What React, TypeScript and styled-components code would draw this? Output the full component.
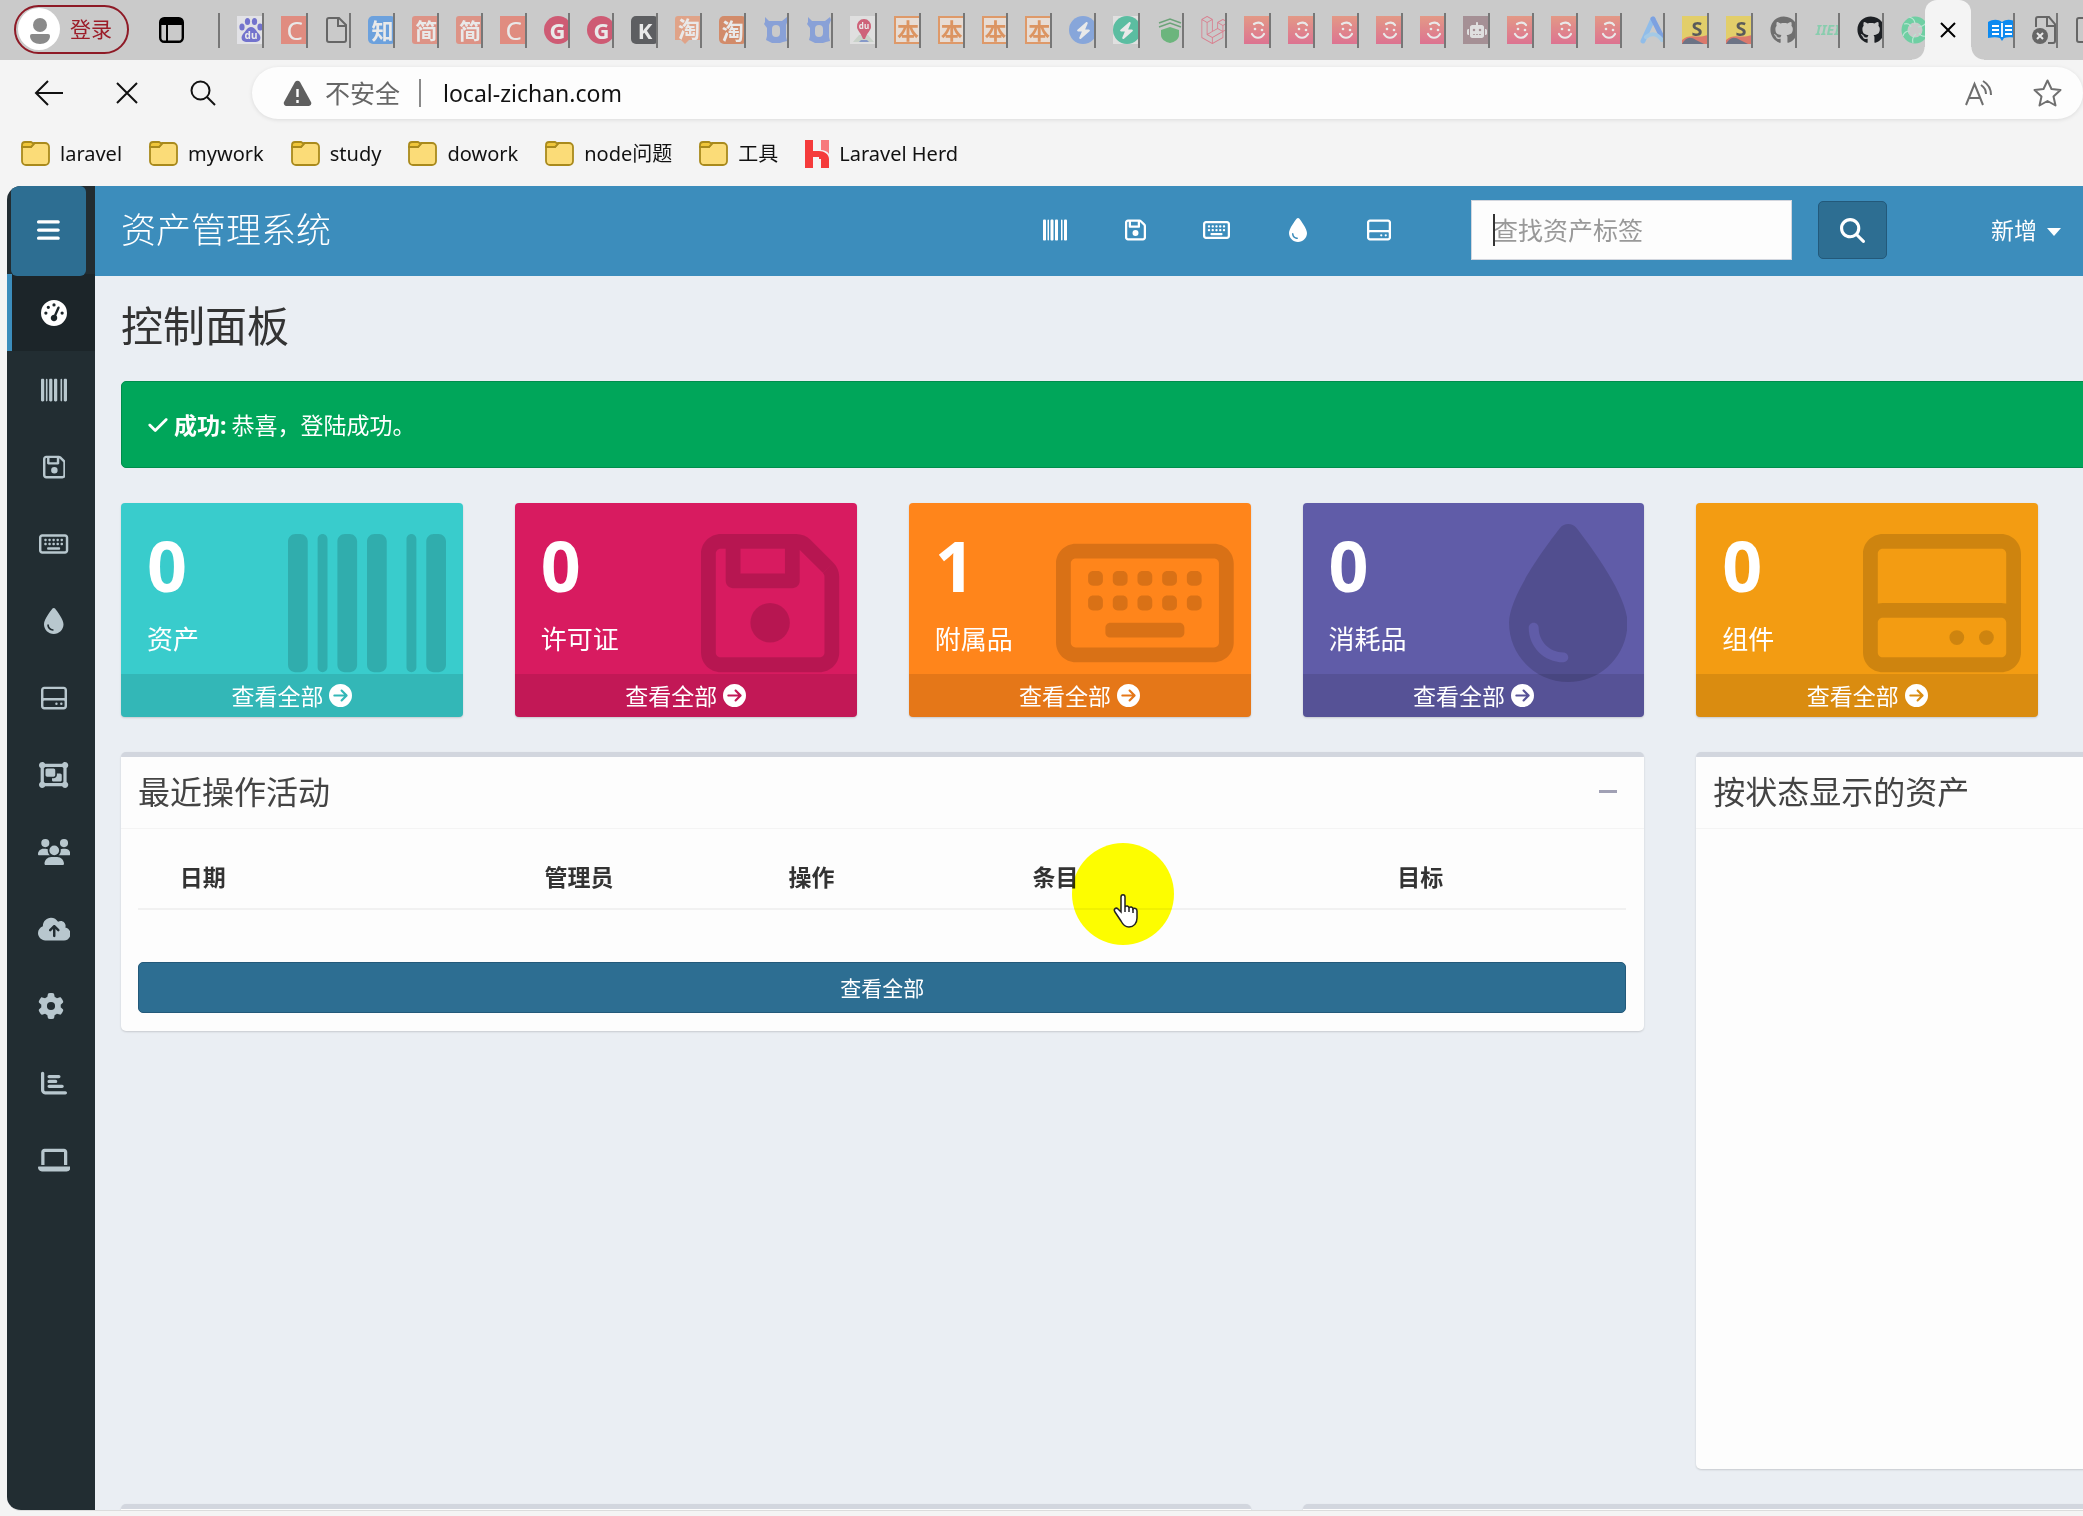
import React from "react";
import styled, { createGlobalStyle, css } from "styled-components";
import {
  FaBarcode,
  FaRegFloppyDisk,
  FaRegKeyboard,
  FaDroplet,
  FaRegHardDrive,
  FaObjectGroup,
  FaUsers,
  FaCloudArrowUp,
  FaGear,
  FaChartBar,
  FaLaptop,
  FaGaugeHigh,
  FaBars,
  FaCheck,
  FaMagnifyingGlass,
  FaCircleArrowRight,
  FaGithub,
  FaLaravel,
  FaBolt,
  FaRobot,
} from "react-icons/fa6";

/* Icon glyphs differ in width; the ratio follows each one's view box. */
const GlobalStyle = createGlobalStyle`
  *, *::before, *::after { box-sizing: border-box; }
  html, body { margin: 0; height: 100%; overflow: hidden; }
  body {
    font-family: "Noto Sans", "Noto Sans CJK SC", sans-serif;
    color: #333;
    background: #f4f4f4;
  }
  a { color: inherit; text-decoration: none; }
  button { font: inherit; margin: 0; padding: 0; border: 0; background: none; color: inherit; }
  svg { display: block; flex: none; }
  svg[viewBox="0 0 384 512"] { aspect-ratio: 384 / 512; }
  svg[viewBox="0 0 448 512"] { aspect-ratio: 448 / 512; }
  svg[viewBox="0 0 576 512"] { aspect-ratio: 576 / 512; }
  svg[viewBox="0 0 640 512"] { aspect-ratio: 640 / 512; }
`;

const Browser = styled.div`
  display: flex;
  flex-direction: column;
  height: 100vh;
  background: #f4f4f4;
`;

/* ---------- tab strip ---------- */

const TabBar = styled.div`
  display: flex;
  align-items: center;
  height: 60px;
  flex: none;
  padding-left: 14px;
  background: #cacaca;
  overflow: hidden;
`;

const Login = styled.button`
  display: flex;
  align-items: center;
  gap: 9px;
  width: 115px;
  height: 49px;
  margin-bottom: 2px;
  padding-left: 2px;
  border: 2px solid #8e1a26;
  border-radius: 25px;
  color: #9c1c28;
  font-size: 21px;
  line-height: 28px;
  white-space: nowrap;
`;

const WindowButton = styled.button`
  margin: 0 34px 0 30px;
`;

const Divider = styled.span<{ $h: number; $color: string }>`
  width: 2px;
  height: ${(p) => p.$h}px;
  background: ${(p) => p.$color};
  flex: none;
`;

const TabList = styled.div`
  display: flex;
  flex: 1;
  min-width: 0;
`;

const Tab = styled.button<{ $w?: number; $last?: boolean; $dim?: boolean }>`
  display: flex;
  align-items: center;
  height: 35px;
  padding-left: 17px;
  overflow: hidden;
  ${(p) =>
    p.$w
      ? css`
          flex: none;
          width: ${p.$w}px;
        `
      : css`
          flex: 1 1 0;
          min-width: 0;
        `}
  border-right: ${(p) => (p.$last ? "0" : "2px solid #777")};
  & > * {
    opacity: ${(p) => (p.$dim ? 0.6 : 1)};
  }
`;

const ActiveTab = styled.div`
  position: relative;
  display: flex;
  align-items: center;
  justify-content: center;
  flex: none;
  width: 46px;
  height: 60px;
  border-radius: 12px 12px 0 0;
  background: #f4f4f4;
  &::before,
  &::after {
    content: "";
    position: absolute;
    bottom: 0;
    width: 13px;
    height: 13px;
  }
  &::before {
    right: 100%;
    background: radial-gradient(circle at 0 0, transparent 12px, #f4f4f4 13px);
  }
  &::after {
    left: 100%;
    background: radial-gradient(circle at 100% 0, transparent 12px, #f4f4f4 13px);
  }
`;

const Tile = styled.span<{ $bg: string; $fg: string; $border?: string; $r?: number; $bold?: boolean; $size?: number }>`
  display: flex;
  align-items: center;
  justify-content: center;
  flex: none;
  width: 28px;
  height: 28px;
  background: ${(p) => p.$bg};
  color: ${(p) => p.$fg};
  border: ${(p) => (p.$border ? `2px solid ${p.$border}` : "0")};
  border-radius: ${(p) => p.$r ?? 0}px;
  font-size: ${(p) => p.$size ?? 22}px;
  font-weight: ${(p) => (p.$bold ? 700 : 400)};
  line-height: 28px;
`;

const BaiduIcon = () => (
  <svg width="28" height="28" viewBox="0 0 28 28">
    <rect width="28" height="28" fill="#f2f2fa" />
    <g fill="#3a3ad0">
      <ellipse cx="5" cy="11" rx="2.6" ry="3.6" />
      <ellipse cx="10.500" cy="5.500" rx="2.600" ry="3.600" />
      <ellipse cx="17.500" cy="5.500" rx="2.600" ry="3.600" />
      <ellipse cx="23" cy="11" rx="2.600" ry="3.600" />
      <path d="M14 11c4 0 5 4 8 7 3 4 1 8-3 8H9c-4 0-6-4-3-8 3-3 4-7 8-7z" />
    </g>
    <text x="14" y="23" fontSize="10" fontWeight="700" textAnchor="middle" fill="#fff">du</text>
  </svg>
);

const FileIcon = () => (
  <svg width="24" height="28" viewBox="0 0 24 28" fill="none" stroke="#666" strokeWidth="2">
    <path d="M4 2h10l7 7v15a2 2 0 0 1-2 2H4a2 2 0 0 1-2-2V4a2 2 0 0 1 2-2zM13 2v8h8" />
  </svg>
);

const OxIcon = () => (
  <svg width="26" height="28" viewBox="0 0 26 28">
    <path
      d="M2 1l4 4h13l5-4 1 3-2 5v12l1 4-4 1-3 1H9l-4-2-2-1 1-4v-8L1 8l1-2z"
      fill="#5f86e0"
    />
    <rect x="9" y="9" width="8" height="12" rx="4" fill="#cacaca" />
  </svg>
);

const TaobaoBubble = styled.span`
  position: relative;
  display: flex;
  align-items: center;
  justify-content: center;
  flex: none;
  width: 28px;
  height: 28px;
  padding-bottom: 4px;
  background: linear-gradient(#f08a5d, #f08a5d) 0 0 / 100% 24px no-repeat;
  border-radius: 3px;
  color: #fff;
  font-size: 22px;
  font-weight: 700;
  line-height: 24px;
  &::after {
    content: "";
    position: absolute;
    bottom: 0;
    left: 6px;
    border: 4px solid transparent;
    border-top-color: #f08a5d;
    border-bottom: 0;
  }
`;

const PinIcon = () => (
  <svg width="26" height="28" viewBox="0 0 26 28">
    <rect width="26" height="28" fill="#ededed" />
    <path d="M3 26l6-7h9l6 7z" fill="#c9d8c9" />
    <path d="M14 3a7 7 0 0 1 7 8c0 3-4 6-6 12h-2C11 17 7 14 7 11a7 7 0 0 1 7-8z" fill="#d21f45" />
    <path d="M9 26h10l-2-2h-6z" fill="#5a79c8" />
    <text x="14" y="13" fontSize="8" fontWeight="700" textAnchor="middle" fill="#fff">du</text>
  </svg>
);

const BoltWrap = styled.span<{ $bg: string; $tile?: string; $shape: string }>`
  display: flex;
  flex: none;
  width: 28px;
  height: 28px;
  background: ${(p) => p.$tile ?? "transparent"};
  & > span {
    display: flex;
    align-items: center;
    justify-content: center;
    width: 28px;
    height: 28px;
    border-radius: ${(p) => p.$shape};
    background: ${(p) => p.$bg};
    color: #fff;
    font-size: 17px;
  }
`;

const ShieldIcon = () => (
  <svg width="26" height="28" viewBox="0 0 26 28">
    <path d="M4 14l9-3 9 3v5c0 4-4 7-9 8-5-1-9-4-9-8z" fill="#2fa84a" />
    <path d="M2 11l11-4 11 4M2 7l11-4 11 4" stroke="#2f8a45" strokeWidth="1.600" fill="none" />
  </svg>
);

const SmileIcon = ({ id }: { id: string }) => (
  <svg width="28" height="28" viewBox="0 0 28 28">
    <defs>
      <linearGradient id={id} x1="0" y1="0" x2="0" y2="1">
        <stop offset="0" stopColor="#f4795a" />
        <stop offset="1" stopColor="#ea3a6c" />
      </linearGradient>
    </defs>
    <rect width="28" height="28" fill={`url(#${id})`} />
    <g fill="none" stroke="#fff" strokeWidth="2.200" strokeLinecap="round">
      <path d="M10 8c3-2 7-2 9 1M8 18c3 5 9 5 12 0" />
    </g>
    <circle cx="11" cy="13" r="1.300" fill="#fff" />
    <circle cx="18" cy="14" r="1.300" fill="#fff" />
  </svg>
);

const LetterAIcon = () => (
  <svg width="28" height="28" viewBox="0 0 28 28" fill="none" strokeLinecap="round" strokeWidth="5">
    <path d="M4 25L14 3" stroke="#6cb6ff" />
    <path d="M14 3l10 20" stroke="#4a86f0" />
    <path d="M7 21c5-4 11-4 16 3" stroke="#8cc9f8" strokeWidth="4" />
  </svg>
);

const StripeIcon = () => (
  <svg width="28" height="28" viewBox="0 0 28 28">
    <rect width="28" height="28" fill="#f3d22b" />
    <path d="M0 24c8-8 16 0 28-6v10H0z" fill="#e8442e" />
    <path d="M0 28c4-7 8-8 14-4l8 4z" fill="#2f3a58" />
    <text x="15" y="20" fontSize="20" fontWeight="700" textAnchor="middle" fill="#111">S</text>
  </svg>
);

const SwirlIcon = () => (
  <svg width="28" height="28" viewBox="0 0 28 28" fill="none">
    <circle cx="14" cy="14" r="10.500" stroke="#6fcfa3" strokeWidth="6" />
    <path d="M8 1c4 1 6 4 6 7M25 7c-2 3-5 4-8 4M26 20c-4 1-7-1-8-3M12 27c-1-3 0-7 3-9M2 20c1-4 4-5 7-5M3 8c3-1 6 0 7 3" stroke="#b9e6d2" strokeWidth="1.200" />
  </svg>
);

const BookIcon = () => (
  <svg width="30" height="28" viewBox="0 0 30 28">
    <path d="M0 6c5-3 10-3 14 0 4-3 9-3 14 0v16c-5-1-9-1-12 0l-2 3-2-3c-3-1-7-1-12 0z" fill="#0d8af0" />
    <path d="M14 7v14M4 10h7M4 14h7M4 18h7M17 10h7M17 14h7M17 18h7" stroke="#fff" strokeWidth="1.800" />
  </svg>
);

const BrokenFileIcon = () => (
  <svg width="26" height="28" viewBox="0 0 26 28" fill="none" stroke="#666" strokeWidth="2">
    <path d="M4 11V3a2 2 0 0 1 2-2h11l6 7v17a2 2 0 0 1-2 2h-5M15 1v9h9" />
    <circle cx="8" cy="20" r="8" fill="#666" stroke="none" />
    <path d="M5 17l6 6M11 17l-6 6" stroke="#e8e8e8" />
  </svg>
);

const Cjk = ({ ch, bg, r = 3 }: { ch: string; bg: string; r?: number }) => (
  <Tile $bg={bg} $fg="#fff" $r={r} $bold>
    {ch}
  </Tile>
);

const tabs: { name: string; icon: React.ReactNode; solid?: boolean }[] = [
  { name: "baidu", icon: <BaiduIcon /> },
  { name: "csdn", icon: <Tile $bg="#ef6450" $fg="#fff" $size={26}>C</Tile> },
  { name: "file", icon: <FileIcon />, solid: true },
  { name: "zhihu", icon: <Cjk ch="知" bg="#2f86ea" r={5} /> },
  { name: "jianshu", icon: <Cjk ch="简" bg="#ea6f5a" /> },
  { name: "jianshu", icon: <Cjk ch="简" bg="#ea6f5a" /> },
  { name: "csdn", icon: <Tile $bg="#ef6450" $fg="#fff" $size={26}>C</Tile> },
  { name: "gitee", icon: <Tile $bg="#d2123c" $fg="#fff" $r={14} $bold>G</Tile> },
  { name: "gitee", icon: <Tile $bg="#d2123c" $fg="#fff" $r={14} $bold>G</Tile> },
  { name: "kimi", icon: <Tile $bg="#16181c" $fg="#fff" $r={5} $bold>K</Tile> },
  { name: "taobao", icon: <TaobaoBubble>淘</TaobaoBubble> },
  { name: "taobao", icon: <Cjk ch="淘" bg="#d8622c" r={5} /> },
  { name: "ox", icon: <OxIcon /> },
  { name: "ox", icon: <OxIcon /> },
  { name: "map", icon: <PinIcon /> },
  ...[1, 2, 3, 4].map(() => ({
    name: "book",
    icon: <Tile $bg="#fbe9dc" $fg="#e8711c" $border="#ec7a2a" $bold>本</Tile>,
  })),
  { name: "bolt", icon: <BoltWrap $bg="#5b8fe6" $shape="14px"><span><FaBolt /></span></BoltWrap> },
  { name: "bolt", icon: <BoltWrap $bg="#12b586" $tile="#f0f0f0" $shape="14px"><span><FaBolt /></span></BoltWrap> },
  { name: "shield", icon: <ShieldIcon /> },
  { name: "laravel", icon: <FaLaravel size={28} color="#e2506a" /> },
  ...[1, 2, 3, 4, 5].map((n) => ({ name: "smile", icon: <SmileIcon id={`sm${n}`} /> })),
  { name: "robot", icon: <Tile $bg="#8d6a72" $fg="#eee" $size={20}><FaRobot /></Tile> },
  ...[6, 7, 8].map((n) => ({ name: "smile", icon: <SmileIcon id={`sm${n}`} /> })),
  { name: "letter a", icon: <LetterAIcon /> },
  { name: "stripe", icon: <StripeIcon /> },
  { name: "stripe", icon: <StripeIcon /> },
  { name: "github", icon: <FaGithub size={28} color="#333" /> },
  { name: "iiei", icon: <Tile $bg="transparent" $fg="#5fcf9d" $bold $size={14}><i>IIEI</i></Tile> },
  { name: "github", icon: <FaGithub size={28} color="#1d2024" />, solid: true },
];

/* ---------- toolbar and bookmarks ---------- */

const Toolbar = styled.div`
  display: flex;
  align-items: center;
  flex: none;
  height: 66px;
  background: #f4f4f4;
`;

const NavButtons = styled.div`
  display: flex;
  justify-content: space-between;
  flex: none;
  width: 252px;
  padding: 0 36px 0 34px;
`;

const Address = styled.form`
  display: flex;
  align-items: center;
  flex: 1;
  height: 52px;
  padding: 0 21px 0 31px;
  border-radius: 26px;
  background: #fdfdfd;
  box-shadow: 0 1px 4px rgba(0, 0, 0, 0.1);
`;

const Insecure = styled.span`
  margin: 0 19px 0 13px;
  color: #666;
  font-size: 25px;
  line-height: 34px;
`;

const UrlInput = styled.input`
  flex: 1;
  min-width: 0;
  margin-left: 22px;
  padding: 0;
  border: 0;
  outline: 0;
  background: none;
  color: #111;
  font: 23px/34px "Noto Sans", "Noto Sans CJK SC", sans-serif;
`;

const AddressActions = styled.div`
  display: flex;
  gap: 40px;
`;

const Bookmarks = styled.nav`
  display: flex;
  align-items: center;
  gap: 27px;
  flex: none;
  height: 55px;
  padding-left: 21px;
  color: #111;
  font-size: 20px;
  line-height: 28px;
  white-space: nowrap;
`;

const Bookmark = styled.a`
  display: flex;
  align-items: center;
  gap: 10px;
`;

const FolderIcon = () => (
  <svg width="29" height="25" viewBox="0 0 29 25" stroke="#a98a1c" strokeWidth="1.800">
    <path d="M1 6v14a4 4 0 0 0 4 4h19a4 4 0 0 0 4-4V6a4 4 0 0 0-4-4H13L10 6z" fill="#fbdc78" />
    <path d="M1 6V4a3 3 0 0 1 3-3h6l3 2-3 3z" fill="#f0c63a" />
  </svg>
);

const HerdIcon = () => (
  <svg width="24" height="28" viewBox="0 0 24 28">
    <path d="M0 0h8v11h6c5 0 10 3 10 8v9h-8v-9h-2v-2H8v11H0z" fill="#f53b3b" />
    <path d="M16 0h8v14c-2-3-5-4-8-4z" fill="#f7797c" />
  </svg>
);

const folders = ["laravel", "mywork", "study", "dowork", "node问题", "工具"];

/* ---------- page ---------- */

const Viewport = styled.div`
  display: flex;
  flex: 1;
  min-height: 0;
  margin: 5px 0 5px 7px;
  border-bottom: 1px solid #dcdcdc;
  border-radius: 14px 0 0 14px;
  overflow: hidden;
  background: #eaeef3;
`;

const Sidebar = styled.nav`
  display: flex;
  flex-direction: column;
  flex: none;
  width: 88px;
  background: #222d32;
`;

const Toggle = styled.button`
  display: flex;
  align-items: center;
  justify-content: center;
  z-index: 1;
  flex: none;
  width: 75px;
  height: 90px;
  margin: 0 0 -2px 4px;
  padding-bottom: 2px;
  border-radius: 6px;
  background: #2d6e92;
  color: #fff;
  svg {
    width: auto;
    height: 26px;
  }
`;

const SideLink = styled.a<{ $active?: boolean; $start?: boolean }>`
  display: flex;
  align-items: center;
  justify-content: ${(p) => (p.$start ? "flex-start" : "center")};
  height: 77px;
  padding: 0 ${(p) => (p.$start ? 0 : 25)}px 0 26px;
  border-left: 5px solid ${(p) => (p.$active ? "#3c8dbc" : "transparent")};
  background: ${(p) => (p.$active ? "#1c2529" : "none")};
  color: ${(p) => (p.$active ? "#fff" : "#b8c7ce")};
  svg {
    width: auto;
    height: 26px;
  }
`;

const sideItems = [
  { name: "控制面板", Icon: FaGaugeHigh, active: true },
  { name: "资产", Icon: FaBarcode },
  { name: "许可证", Icon: FaRegFloppyDisk },
  { name: "附属品", Icon: FaRegKeyboard },
  { name: "消耗品", Icon: FaDroplet },
  { name: "组件", Icon: FaRegHardDrive },
  { name: "预定义套件", Icon: FaObjectGroup },
  { name: "人员", Icon: FaUsers },
  { name: "导入", Icon: FaCloudArrowUp },
  { name: "设置", Icon: FaGear, start: true },
  { name: "报告", Icon: FaChartBar },
  { name: "可申领", Icon: FaLaptop },
];

const Main = styled.div`
  flex: 1;
  min-width: 0;
`;

const Header = styled.header`
  display: flex;
  align-items: center;
  height: 90px;
  padding: 0 22px 2px 26px;
  background: #3c8dbc;
  color: #fff;
`;

const Brand = styled.a`
  flex: 1;
  font-size: 35px;
  font-weight: 300;
  line-height: 48px;
  white-space: nowrap;
`;

const HeaderLinks = styled.div`
  display: flex;
  margin-right: 52px;
`;

const HeaderLink = styled.a`
  display: flex;
  justify-content: center;
  width: 81px;
  svg {
    width: auto;
    height: 24px;
  }
`;

const SearchForm = styled.form`
  display: flex;
  align-items: center;
  gap: 26px;
  margin-right: 104px;
`;

const SearchField = styled.label`
  position: relative;
  &::after {
    content: "";
    position: absolute;
    top: 14px;
    left: 22px;
    width: 2px;
    height: 32px;
    background: #333;
  }
`;

const SearchInput = styled.input`
  display: block;
  width: 321px;
  height: 60px;
  padding: 0 21px;
  border: 1px solid #d2d6de;
  border-radius: 0;
  outline: 0;
  background: #fdfdfd;
  font: 25px/34px "Noto Sans", "Noto Sans CJK SC", sans-serif;
  &::placeholder {
    color: #999;
    opacity: 1;
  }
`;

const SearchButton = styled.button`
  display: flex;
  align-items: center;
  justify-content: center;
  width: 69px;
  height: 58px;
  border: 1px solid #23597a;
  border-radius: 5px;
  background: #2d6e92;
  color: #fff;
`;

const CreateMenu = styled.button`
  display: flex;
  align-items: center;
  gap: 10px;
  font-size: 23px;
  line-height: 32px;
  white-space: nowrap;
  &::after {
    content: "";
    margin-top: 4px;
    border: 7px solid transparent;
    border-top: 8px solid #fff;
    border-bottom: 0;
  }
`;

const Content = styled.main`
  display: grid;
  grid-template-columns: repeat(6, minmax(0, 1fr));
  column-gap: 52px;
  row-gap: 35px;
  width: calc(100% + 375px);
  padding: 22px 26px 0;
`;

const PageTitle = styled.h1`
  grid-column: 1 / -1;
  margin: 0 0 -7px;
  font-size: 42px;
  font-weight: 400;
  line-height: 55px;
`;

const Alert = styled.div`
  display: flex;
  align-items: center;
  gap: 5px;
  grid-column: 1 / -1;
  height: 87px;
  padding: 0 25px;
  border: 1px solid #008d4c;
  border-radius: 5px;
  background: #00a65a;
  color: #fff;
  font-size: 23px;
  line-height: 32px;
`;

const Card = styled.section<{ $bg: string }>`
  position: relative;
  display: flex;
  flex-direction: column;
  border-radius: 4px;
  background: ${(p) => p.$bg};
  color: #fff;
  box-shadow: 0 1px 2px rgba(0, 0, 0, 0.15);
`;

const CardBody = styled.div`
  padding: 20px 26px 17px;
`;

const CardNumber = styled.strong`
  display: block;
  margin-bottom: 15px;
  font-size: 70px;
  line-height: 84px;
`;

const CardLabel = styled.span`
  display: block;
  font-size: 26px;
  line-height: 35px;
`;

const CardArt = styled.span`
  position: absolute;
  top: 21px;
  right: 17px;
  color: rgba(0, 0, 0, 0.15);
  svg {
    width: auto;
    height: 158px;
  }
`;

const CardFooter = styled.a`
  position: relative;
  display: flex;
  align-items: center;
  justify-content: center;
  gap: 6px;
  height: 43px;
  border-radius: 0 0 4px 4px;
  background: rgba(0, 0, 0, 0.1);
  font-size: 23px;
  line-height: 32px;
`;

const Box = styled.section<{ $span: number; $h?: number }>`
  grid-column: span ${(p) => p.$span};
  align-self: start;
  min-height: ${(p) => p.$h ?? 0}px;
  border-top: 5px solid #d2d6de;
  border-radius: 5px;
  background: #fdfdfd;
  box-shadow: 0 1px 2px rgba(0, 0, 0, 0.15);
`;

const BoxHeader = styled.div`
  display: flex;
  align-items: center;
  justify-content: space-between;
  height: 72px;
  padding: 0 27px 2px 17px;
  border-bottom: 1px solid #f4f4f4;
  color: #444;
`;

const BoxTitle = styled.h2`
  margin: 0;
  font-size: 32px;
  font-weight: 400;
  line-height: 42px;
`;

const Collapse = styled.button`
  display: flex;
  align-items: center;
  width: 18px;
  height: 26px;
  &::before {
    content: "";
    flex: 1;
    height: 3px;
    background: #a0a0b4;
  }
`;

const BoxBody = styled.div`
  padding: 17px 18px 18px 17px;
`;

const Table = styled.table`
  width: 100%;
  margin-bottom: 52px;
  table-layout: fixed;
  border-collapse: collapse;
`;

const Th = styled.th<{ $w: string }>`
  width: ${(p) => p.$w};
  height: 63px;
  padding: 0 12px 1px;
  border-bottom: 2px solid #f1f1f1;
  font-size: 23px;
  line-height: 32px;
  text-align: left;
`;

const ViewAll = styled.a`
  display: flex;
  align-items: center;
  justify-content: center;
  height: 51px;
  border: 1px solid #23597a;
  border-radius: 5px;
  background: #2d6e92;
  color: #fff;
  font-size: 21px;
  line-height: 30px;
`;

const Pointer = styled.div`
  position: absolute;
  top: 843px;
  left: 1072px;
  width: 102px;
  height: 102px;
  border-radius: 50%;
  background: #ffff00;
  mix-blend-mode: multiply;
  pointer-events: none;
`;

const Hand = styled.svg`
  position: absolute;
  top: 894px;
  left: 1112px;
  pointer-events: none;
`;

const cards = [
  { n: 0, label: "资产", bg: "#39cccc", Icon: FaBarcode },
  { n: 0, label: "许可证", bg: "#d81b60", Icon: FaRegFloppyDisk },
  { n: 1, label: "附属品", bg: "#ff851b", Icon: FaRegKeyboard },
  { n: 0, label: "消耗品", bg: "#605ca8", Icon: FaDroplet },
  { n: 0, label: "组件", bg: "#f39c12", Icon: FaRegHardDrive },
];

const columns = [
  { title: "", w: "2%" },
  { title: "日期", w: "24.5%" },
  { title: "管理员", w: "16.4%" },
  { title: "操作", w: "16.4%" },
  { title: "条目", w: "24.5%" },
  { title: "目标", w: "auto" },
];

export default function App() {
  return (
    <Browser>
      <GlobalStyle />
      <TabBar>
        <Login>
          <svg width="43" height="43" viewBox="0 0 43 43">
            <circle cx="21" cy="21" r="21" fill="#fff" />
            <circle cx="22" cy="17" r="7" fill="#8a8a8a" />
            <path d="M12 28a2 2 0 0 1 2-2h16a2 2 0 0 1 2 2c0 5-5 8-10 8s-10-3-10-8z" fill="#8a8a8a" />
          </svg>
          登录
        </Login>
        <WindowButton aria-label="window">
          <svg width="25" height="26" viewBox="0 0 25 26">
            <rect x="1.200" y="1.200" width="22.600" height="23.600" rx="4" fill="none" stroke="#000" strokeWidth="2.400" />
            <path d="M1 8V5a4 4 0 0 1 4-4h15a4 4 0 0 1 4 4v3z" />
            <path d="M8 8v17" stroke="#000" strokeWidth="2" />
          </svg>
        </WindowButton>
        <Divider $h={35} $color="#777" />
        <TabList>
          {tabs.map((t, i) => (
            <Tab key={i} aria-label={t.name} $dim={!t.solid}>
              {t.icon}
            </Tab>
          ))}
        </TabList>
        <Tab $w={41} $last aria-label="swirl">
          <SwirlIcon />
        </Tab>
        <ActiveTab>
          <button aria-label="close">
            <svg width="16" height="16" viewBox="0 0 16 16" stroke="#000" strokeWidth="2">
              <path d="M1 1l14 14M15 1L1 15" />
            </svg>
          </button>
        </ActiveTab>
        <Tab $w={44} aria-label="book">
          <BookIcon />
        </Tab>
        <Tab $w={43} aria-label="error page">
          <BrokenFileIcon />
        </Tab>
        <Tab $w={25} $last aria-label="file">
          <FileIcon />
        </Tab>
      </TabBar>

      <Toolbar>
        <NavButtons>
          <button aria-label="back">
            <svg width="29" height="26" viewBox="0 0 29 26" fill="none" stroke="#111" strokeWidth="2">
              <path d="M14 1L2 13l12 12M2 13h27" />
            </svg>
          </button>
          <button aria-label="stop">
            <svg width="22" height="22" viewBox="0 0 22 22" stroke="#111" strokeWidth="2">
              <path d="M1 1l20 20M21 1L1 21" />
            </svg>
          </button>
          <button aria-label="search">
            <svg width="26" height="26" viewBox="0 0 26 26" fill="none" stroke="#111" strokeWidth="2">
              <circle cx="10.500" cy="10.500" r="9" />
              <path d="M17 17l8 8" />
            </svg>
          </button>
        </NavButtons>
        <Address>
          <svg width="29" height="27" viewBox="0 0 29 27">
            <path d="M12 2a3 3 0 0 1 5 0l11 20a3 3 0 0 1-2 4H3a3 3 0 0 1-2-4z" fill="#5f5f5f" />
            <path d="M14.500 9v8M14.500 20v3" stroke="#fff" strokeWidth="2.400" />
          </svg>
          <Insecure>不安全</Insecure>
          <Divider $h={28} $color="#8a8a8a" />
          <UrlInput aria-label="address" defaultValue="local-zichan.com" />
          <AddressActions>
            <button type="button" aria-label="read aloud">
              <svg width="28" height="27" viewBox="0 0 28 27" fill="none" stroke="#6f6f6f" strokeWidth="2">
                <path d="M1 25L9.500 4 18 25M4 18h11" />
                <path d="M16 5c3 2 5 5 5 9M18 1c5 3 8 8 8 14" />
              </svg>
            </button>
            <button type="button" aria-label="favorite">
              <svg width="29" height="28" viewBox="0 0 29 28" fill="none" stroke="#6f6f6f" strokeWidth="2" strokeLinejoin="round">
                <path d="M14.500 1.500l4 8.500 9 1-7 6.500 2 9-8-4.500-8 4.500 2-9-7-6.500 9-1z" />
              </svg>
            </button>
          </AddressActions>
        </Address>
      </Toolbar>

      <Bookmarks>
        {folders.map((f) => (
          <Bookmark key={f} href="#">
            <FolderIcon />
            {f}
          </Bookmark>
        ))}
        <Bookmark href="#">
          <HerdIcon />
          Laravel Herd
        </Bookmark>
      </Bookmarks>

      <Viewport>
        <Sidebar>
          <Toggle aria-label="menu">
            <FaBars />
          </Toggle>
          {sideItems.map(({ name, Icon, active, start }) => (
            <SideLink key={name} href="#" aria-label={name} $active={active} $start={start}>
              <Icon />
            </SideLink>
          ))}
        </Sidebar>
        <Main>
          <Header>
            <Brand href="#">资产管理系统</Brand>
            <HeaderLinks>
              {cards.map(({ label, Icon }) => (
                <HeaderLink key={label} href="#" aria-label={label}>
                  <Icon />
                </HeaderLink>
              ))}
            </HeaderLinks>
            <SearchForm>
              <SearchField>
                <SearchInput aria-label="查找资产标签" placeholder="查找资产标签" />
              </SearchField>
              <SearchButton type="button" aria-label="search">
                <FaMagnifyingGlass size={25} />
              </SearchButton>
            </SearchForm>
            <CreateMenu>新增</CreateMenu>
          </Header>
          <Content>
            <PageTitle>控制面板</PageTitle>
            <Alert>
              <FaCheck size={22} />
              <strong>成功:</strong>
              <span>恭喜，登陆成功。</span>
            </Alert>
            {cards.map(({ n, label, bg, Icon }) => (
              <Card key={label} $bg={bg}>
                <CardArt>
                  <Icon />
                </CardArt>
                <CardBody>
                  <CardNumber>{n}</CardNumber>
                  <CardLabel>{label}</CardLabel>
                </CardBody>
                <CardFooter href="#">
                  查看全部
                  <FaCircleArrowRight size={23} />
                </CardFooter>
              </Card>
            ))}
            <span />
            <Box $span={4}>
              <BoxHeader>
                <BoxTitle>最近操作活动</BoxTitle>
                <Collapse aria-label="collapse" />
              </BoxHeader>
              <BoxBody>
                <Table>
                  <thead>
                    <tr>
                      {columns.map((c) => (
                        <Th key={c.title} $w={c.w}>
                          {c.title}
                        </Th>
                      ))}
                    </tr>
                  </thead>
                </Table>
                <ViewAll href="#">查看全部</ViewAll>
              </BoxBody>
            </Box>
            <Box $span={2} $h={717}>
              <BoxHeader>
                <BoxTitle>按状态显示的资产</BoxTitle>
              </BoxHeader>
            </Box>
            <Box $span={3} $h={80} />
            <Box $span={3} $h={80} />
          </Content>
        </Main>
      </Viewport>

      <Pointer />
      <Hand width="27" height="34" viewBox="0 0 27 34">
        <path
          d="M9 3c0-3 4-3 4 0v10c1-2 4-1 4 1 1-2 4-1 4 1 1-1 4-1 4 2v7c0 5-3 9-8 9-4 0-6-2-8-6l-6-9c-2-3 1-5 3-3l3 3z"
          fill="#fff"
          stroke="#222"
          strokeWidth="1.500"
        />
        <path d="M13 13v5M17 14v4M21 15v4" stroke="#222" strokeWidth="1.500" />
      </Hand>
    </Browser>
  );
}
